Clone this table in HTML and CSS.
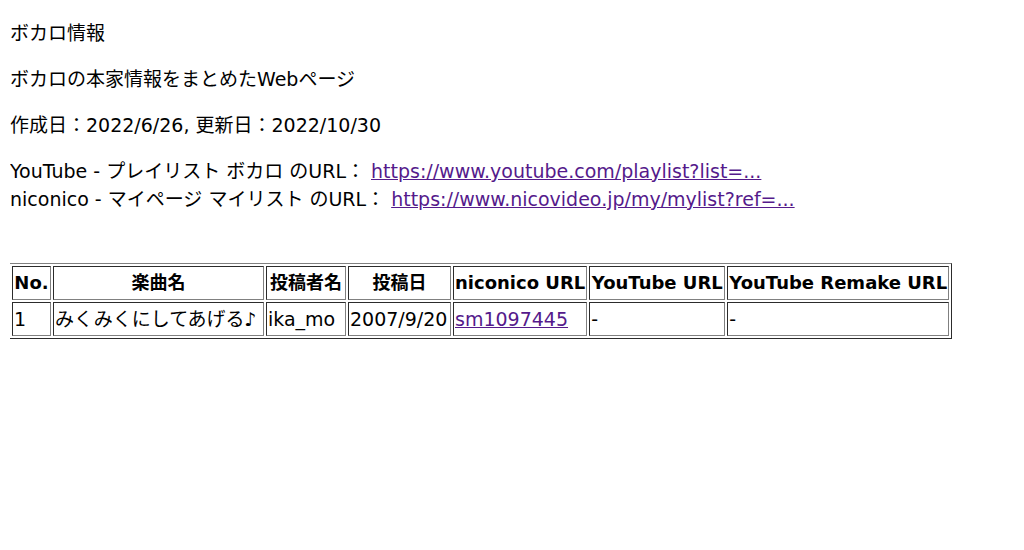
FILE: index.html
```html
<!DOCTYPE html>
<html lang="ja">
<head>
    <meta charset="UTF-8">
    <title>ボカロ情報</title>
    <link rel="stylesheet" href="styles.css">
</head>
<body>
    <p>ボカロ情報</p>
    <p>ボカロの本家情報をまとめたWebページ</p>
    <p>作成日：2022/6/26, 更新日：2022/10/30</p>
    <p>
        YouTube - プレイリスト ボカロ のURL： <a href="#">https://www.youtube.com/playlist?list=...</a><br>
        niconico - マイページ マイリスト のURL： <a href="#">https://www.nicovideo.jp/my/mylist?ref=...</a>
    </p>

    <!-- 楽曲一覧 -->
    <table class="songs">
        <thead>
            <tr>
                <th class="col-no">No.</th>
                <th class="col-title">楽曲名</th>
                <th class="col-author">投稿者名</th>
                <th class="col-date">投稿日</th>
                <th class="col-nico">niconico URL</th>
                <th class="col-yt">YouTube URL</th>
                <th class="col-remake">YouTube Remake URL</th>
            </tr>
        </thead>
        <tbody>
            <tr>
                <td>1</td>
                <td>みくみくにしてあげる♪</td>
                <td>ika_mo</td>
                <td>2007/9/20</td>
                <td><a href="#">sm1097445</a></td>
                <td>-</td>
                <td>-</td>
            </tr>
        </tbody>
    </table>
</body>
</html>
```

FILE: styles.css
```css
body {
    margin: 19px 8px 8px 10px;
    font-family: "DejaVu Sans", "Noto Sans CJK JP", sans-serif;
    font-size: 19px;
    line-height: 28px;
    color: #000;
}

p {
    margin: 18px 0;
}

p:first-child {
    margin-top: 0;
}

a {
    color: #551a8b;
}

/* Tabel lagu */
.songs {
    margin-top: 50px;
    margin-left: -1px;
    table-layout: fixed;
    border: 1px outset grey;
    border-spacing: 2px;
    font-size: 18px;
    line-height: 30px;
}

.songs th,
.songs td {
    box-sizing: border-box;
    border: 1px inset grey;
    padding: 1px;
    white-space: nowrap;
    overflow: visible;
}

.songs th {
    font-weight: bold;
    text-align: center;
}

.songs td {
    font-size: 19px;
    text-align: left;
}

/* Lebar kolom */
.col-no { width: 39px; }
.col-title { width: 211px; }
.col-author { width: 80px; }
.col-date { width: 103px; }
.col-nico { width: 133px; }
.col-yt { width: 136px; }
.col-remake { width: 221px; }
```
